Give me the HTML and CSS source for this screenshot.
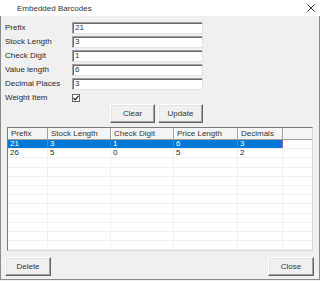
FILE: index.html
```html
<!DOCTYPE html>
<html>
<head>
  <title>Embedded Barcodes</title>
  <link rel="stylesheet" href="styles.css">
</head>
<body>
  <div class="window">
    <div class="titlebar">
      <span class="title">Embedded Barcodes</span>
      <svg class="close" width="8" height="8" viewBox="0 0 8 8">
        <path d="M0.5 0.5 L7.5 7.5 M7.5 0.5 L0.5 7.5" stroke="#333" stroke-width="1" fill="none"/>
      </svg>
    </div>

    <div class="content">
      <div class="top">
        <div class="fields">
          <label>Prefix</label><div class="input">21</div>
          <label>Stock Length</label><div class="input">3</div>
          <label>Check Digit</label><div class="input">1</div>
          <label>Value length</label><div class="input">6</div>
          <label>Decimal Places</label><div class="input">3</div>
        </div>
        <div class="check-row">
          <label>Weight Item</label>
          <span class="checkbox">
            <svg width="6" height="6" viewBox="0 0 6 6">
              <path d="M0.5 3 L2.2 4.8 L5.5 0.8" stroke="#222" stroke-width="1.2" fill="none"/>
            </svg>
          </span>
        </div>
        <div class="actions">
          <button class="btn">Clear</button>
          <button class="btn">Update</button>
        </div>
      </div>

      <div class="grid">
        <div class="row head">
          <div>Prefix</div><div>Stock Length</div><div>Check Digit</div><div>Price Length</div><div>Decimals</div><div></div>
        </div>
        <div class="row selected">
          <div>21</div><div>3</div><div>1</div><div>6</div><div>3</div><div></div>
        </div>
        <div class="row">
          <div>26</div><div>5</div><div>0</div><div>5</div><div>2</div><div></div>
        </div>
        <div class="row"><div></div><div></div><div></div><div></div><div></div><div></div></div>
        <div class="row"><div></div><div></div><div></div><div></div><div></div><div></div></div>
        <div class="row"><div></div><div></div><div></div><div></div><div></div><div></div></div>
        <div class="row"><div></div><div></div><div></div><div></div><div></div><div></div></div>
        <div class="row"><div></div><div></div><div></div><div></div><div></div><div></div></div>
        <div class="row"><div></div><div></div><div></div><div></div><div></div><div></div></div>
        <div class="row"><div></div><div></div><div></div><div></div><div></div><div></div></div>
        <div class="row"><div></div><div></div><div></div><div></div><div></div><div></div></div>
        <div class="row"><div></div><div></div><div></div><div></div><div></div><div></div></div>
        <div class="row"><div></div><div></div><div></div><div></div><div></div><div></div></div>
      </div>

      <div class="footer">
        <button class="btn wide">Delete</button>
        <button class="btn wide">Close</button>
      </div>
    </div>
  </div>
</body>
</html>
```

FILE: styles.css
```css
/* dialog look, small windows font */
html, body {
  margin: 0;
  padding: 0;
  background: #f0f0f0;
}

body {
  font-family: "Liberation Sans", Arial, sans-serif;
  font-size: 8px;
  color: #2a2a2a;
}

.window {
  width: 320px;
  height: 280px;
  box-sizing: border-box;
  border: 1px solid #8c8c8c;
  border-top: none;
  background: #f0f0f0;
  display: flex;
  flex-direction: column;
}

.titlebar {
  height: 16px;
  background: #ffffff;
  display: flex;
  align-items: center;
  justify-content: space-between;
  padding: 0 5px 0 17px;
  margin: 0 -1px;
  flex-shrink: 0;
}

.title {
  font-size: 8px;
  color: #333;
}

.content {
  flex: 1;
  display: flex;
  flex-direction: column;
  padding: 6px 5px 0 4px;
}

.top {
  width: 198px;
}

.fields {
  display: grid;
  grid-template-columns: 67px 131px;
  grid-auto-rows: 12px;
  row-gap: 2px;
  align-items: center;
}

.fields label,
.check-row label {
  line-height: 12px;
}

.input {
  height: 12px;
  box-sizing: border-box;
  background: #fff;
  border-top: 1px solid #a0a0a0;
  border-left: 1px solid #a0a0a0;
  border-right: 1px solid #e3e3e3;
  border-bottom: 1px solid #e3e3e3;
  box-shadow: inset 1px 1px 0 #696969;
  padding: 0 0 0 2px;
  line-height: 10px;
  color: #333;
}

.check-row {
  display: grid;
  grid-template-columns: 67px auto;
  align-items: center;
  height: 10px;
  margin-top: 2px;
}

.checkbox {
  width: 8px;
  height: 8px;
  box-sizing: border-box;
  border: 1px solid #666;
  background: #fff;
  display: flex;
  align-items: center;
  justify-content: center;
}

.actions {
  display: flex;
  justify-content: flex-end;
  gap: 3px;
  margin-top: 2px;
}

.btn {
  width: 45px;
  height: 19px;
  box-sizing: border-box;
  padding: 0;
  font-family: "Liberation Sans", Arial, sans-serif;
  font-size: 8px;
  color: #333;
  background: #f0f0f0;
  border-top: 1px solid #ffffff;
  border-left: 1px solid #ffffff;
  border-right: 1px solid #646464;
  border-bottom: 1px solid #646464;
  box-shadow: inset -1px -1px 0 #a0a0a0, inset 1px 1px 0 #e3e3e3;
}

.btn.wide {
  width: 46px;
}

.grid {
  margin: 4px 1px 0 2px;
  height: 124px;
  box-sizing: border-box;
  background: #fff;
  border-top: 1px solid #7a7a7a;
  border-left: 1px solid #7a7a7a;
  border-right: 1px solid #d8d8d8;
  border-bottom: 1px solid #d8d8d8;
  overflow: hidden;
}

.row {
  display: grid;
  grid-template-columns: 40px 63px 63px 64px 45px 1fr;
  height: 9.2px;
  box-sizing: border-box;
  border-bottom: 1px solid #f0f0f0;
}

.row > div {
  border-right: 1px solid #f0f0f0;
  padding-left: 2px;
  line-height: 8px;
  white-space: nowrap;
  overflow: hidden;
}

.row > div:last-child {
  border-right: none;
}

.row.head {
  height: 12px;
  background: #f4f4f4;
  border-bottom: 1px solid #a0a0a0;
}

.row.head > div {
  border-right: 1px solid #a0a0a0;
  box-shadow: inset 1px 0 0 #fff;
  line-height: 11px;
  padding-left: 3px;
  color: #333;
}

.row.head > div:last-child {
  border-right: none;
}

.row.selected > div {
  background: #0078d7;
  color: #fff;
  border-right-color: #2b8ae0;
}

.row.selected > div:nth-child(5) {
  border-right-color: #8a5fb6;
}

.row.selected > div:last-child {
  background: #fff;
}

.footer {
  display: flex;
  justify-content: space-between;
  margin-top: 6px;
}
```
